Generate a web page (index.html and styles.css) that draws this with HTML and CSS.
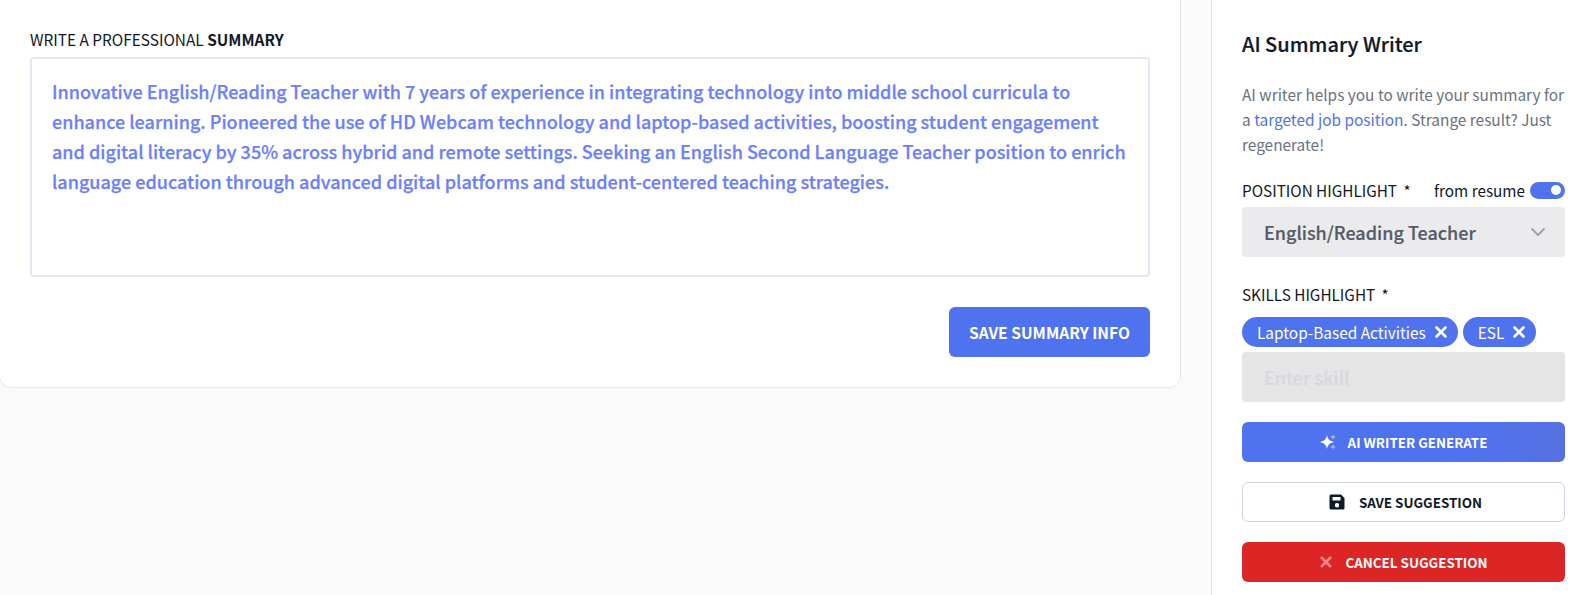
FILE: index.html

```html
<!DOCTYPE html>
<html lang="en">
<head>
  <meta charset="UTF-8" />
  <meta name="viewport" content="width=device-width, initial-scale=1.0"/>
  <title>AI Summary Writer</title>
  <link rel="stylesheet" href="styles.css">
</head>
<body>

<div class="page">
  <main class="editor-col">
    <section class="summary-card">
      <label class="summary-label">WRITE A PROFESSIONAL <strong>SUMMARY</strong></label>
      <div class="summary-text">Innovative English/Reading Teacher with 7 years of experience in integrating technology into middle school curricula to enhance learning. Pioneered the use of HD Webcam technology and laptop-based activities, boosting student engagement and digital literacy by 35% across hybrid and remote settings. Seeking an English Second Language Teacher position to enrich language education through advanced digital platforms and student-centered teaching strategies.</div>
      <div class="summary-actions">
        <button class="btn-save-info">SAVE SUMMARY INFO</button>
      </div>
    </section>
  </main>

  <aside class="sidebar">
    <h2 class="sidebar-title">AI Summary Writer</h2>
    <p class="sidebar-desc">AI writer helps you to write your summary for a <a href="#">targeted job position</a>. Strange result? Just regenerate!</p>

    <div class="field-head">
      <span>POSITION HIGHLIGHT <i class="req">*</i></span>
      <span class="from-resume">from resume <span class="toggle"><span class="toggle-knob"></span></span></span>
    </div>
    <div class="select-box">
      <span>English/Reading Teacher</span>
      <svg width="16" height="10" viewBox="0 0 16 10" fill="none" stroke="#9ca3af" stroke-width="2" stroke-linecap="round" stroke-linejoin="round"><path d="M2 2l6 6 6-6"/></svg>
    </div>

    <div class="field-head skills-head">
      <span>SKILLS HIGHLIGHT <i class="req">*</i></span>
    </div>
    <div class="chips">
      <span class="chip">Laptop-Based Activities
        <svg width="12" height="12" viewBox="0 0 12 12" fill="none" stroke="#fff" stroke-width="2.6" stroke-linecap="round"><path d="M1.5 1.5l9 9M10.5 1.5l-9 9"/></svg>
      </span>
      <span class="chip">ESL
        <svg width="12" height="12" viewBox="0 0 12 12" fill="none" stroke="#fff" stroke-width="2.6" stroke-linecap="round"><path d="M1.5 1.500l9 9M10.5 1.500l-9 9"/></svg>
      </span>
    </div>
    <div class="skill-input">Enter skill</div>

    <button class="action action-generate">
      <svg width="16" height="16" viewBox="0 0 16 16" fill="#fff"><path d="M7 1c.8 4 2.500 6 7 7-4.500 1-6.200 3-7 7-.8-4-2.500-6-7-7 4.500-1 6.200-3 7-7z"/><path opacity=".5" d="M13 0c.3 1.800.9 2.600 3 3-2.100.4-2.700 1.200-3 3-.3-1.800-.9-2.600-3-3 2.100-.4 2.700-1.200 3-3zM13 10c.3 1.800.9 2.600 3 3-2.100.4-2.700 1.200-3 3-.3-1.800-.9-2.600-3-3 2.100-.4 2.700-1.200 3-3z"/></svg>
      AI WRITER GENERATE
    </button>
    <button class="action action-save">
      <svg width="16" height="16" viewBox="0 0 16 16" fill="#111827"><path fill-rule="evenodd" d="M2 0.500h10l3.500 3.500v10a1.500 1.500 0 0 1-1.500 1.500H2A1.500 1.500 0 0 1 .5 14V2A1.500 1.500 0 0 1 2 .5zM3.500 3v3.500h8V3zM8 9a2.200 2.200 0 1 0 0 4.400A2.200 2.200 0 0 0 8 9z"/></svg>
      SAVE SUGGESTION
    </button>
    <button class="action action-cancel">
      <svg width="14" height="14" viewBox="0 0 14 14" fill="none" stroke="#f0838a" stroke-width="2.800"><path d="M2 2l10 10M12 2L2 12"/></svg>
      CANCEL SUGGESTION
    </button>
  </aside>
</div>

</body>
</html>
```

FILE: styles.css

```css
html, body {
  height: 100%;
}
body {
  margin: 0;
  overflow: hidden;
  background: #fafafa;
  color: #111827;
  font-family: "Noto Sans CJK SC", "Noto Sans", sans-serif;
  font-size: 15.3px;
}
.page {
  display: flex;
  height: 595px;
}
.editor-col {
  width: 1181px;
  flex-shrink: 0;
}
.summary-card {
  box-sizing: border-box;
  margin: -20px 0 0 -1px;
  height: 408px;
  padding: 46px 30px 0 30px;
  background: #fff;
  border: 1px solid #e5e7eb;
  border-radius: 12px;
}
.summary-label {
  display: block;
  height: 24px;
  margin-bottom: 6px;
  line-height: 24px;
  font-size: 15.4px;
}
.summary-label strong {
  font-weight: 700;
}
.summary-text {
  box-sizing: border-box;
  height: 220px;
  padding: 17px 20px;
  border: 2px solid #e2e8f4;
  border-radius: 4px;
  color: #6b7fff;
  font-size: 18px;
  font-weight: 500;
  line-height: 30px;
  -webkit-text-stroke: 0.25px #6b7fff;
}
.summary-actions {
  display: flex;
  justify-content: flex-end;
  margin-top: 30px;
}
.btn-save-info {
  width: 201px;
  height: 50px;
  border: none;
  border-radius: 6px;
  background: #4f73ee;
  color: #fff;
  font-family: inherit;
  font-size: 15.6px;
  font-weight: 700;
}
.sidebar {
  box-sizing: border-box;
  width: 382px;
  margin-left: 30px;
  margin-top: -20px;
  padding: 49px 28px 0 30px;
  height: 640px;
  background: #fff;
  border-left: 1px solid #e5e7eb;
  border-top: 1px solid #e5e7eb;
  border-top-left-radius: 12px;
}
.sidebar-title {
  margin: 0;
  height: 28px;
  line-height: 28px;
  font-size: 20px;
  font-weight: 500;
  -webkit-text-stroke: 0.2px #111827;
}
.sidebar-desc {
  margin: 24px 0 0;
  color: #6b7280;
  font-size: 15.4px;
  line-height: 25px;
}
.sidebar-desc a {
  color: #4f73ee;
  text-decoration: none;
}
.field-head {
  display: flex;
  justify-content: space-between;
  align-items: center;
  height: 24px;
  margin-top: 21px;
  line-height: 24px;
}
.req {
  margin-left: 3px;
  font-style: normal;
}
.from-resume {
  display: flex;
  align-items: center;
  gap: 5px;
}
.toggle {
  display: flex;
  justify-content: flex-end;
  align-items: center;
  width: 35px;
  height: 17px;
  padding: 0 4px;
  box-sizing: border-box;
  border-radius: 9px;
  background: #4f73ee;
}
.toggle-knob {
  width: 10px;
  height: 10px;
  border-radius: 50%;
  background: #fff;
}
.select-box {
  display: flex;
  justify-content: space-between;
  align-items: center;
  box-sizing: border-box;
  height: 50px;
  margin-top: 5px;
  padding: 0 19px 0 22px;
  border-radius: 4px;
  background: #ebebed;
  color: #555b66;
  font-size: 18px;
  font-weight: 500;
  -webkit-text-stroke: 0.2px #555b66;
}
.skills-head {
  margin-top: 25px;
}
.chips {
  display: flex;
  gap: 5px;
  margin-top: 11px;
}
.chip {
  display: flex;
  align-items: center;
  gap: 9px;
  height: 30px;
  padding: 0 11px 0 15px;
  border-radius: 15px;
  background: #4f73ee;
  color: #fff;
  font-size: 15.4px;
}
.skill-input {
  box-sizing: border-box;
  height: 50px;
  margin-top: 5px;
  padding-left: 22px;
  border-radius: 4px;
  background: #e5e5e6;
  color: #d5d9e0;
  font-size: 18px;
  font-weight: 500;
  line-height: 50px;
  -webkit-text-stroke: 0.2px #d5d9e0;
}
.action {
  display: flex;
  justify-content: center;
  align-items: center;
  gap: 12px;
  box-sizing: border-box;
  width: 100%;
  height: 40px;
  margin-top: 20px;
  border: none;
  border-radius: 6px;
  font-family: inherit;
  font-size: 13.4px;
  font-weight: 700;
}
.action-generate {
  padding-right: 6px;
  background: linear-gradient(90deg, #4f73ee 70%, #5570e0);
  color: #fff;
}
.action-save {
  gap: 14px;
  padding-right: 2px;
  border: 1px solid #cbd5e1;
  background: #fff;
  color: #111827;
}
.action-cancel {
  background: #dc2626;
  color: #fff;
}
```
